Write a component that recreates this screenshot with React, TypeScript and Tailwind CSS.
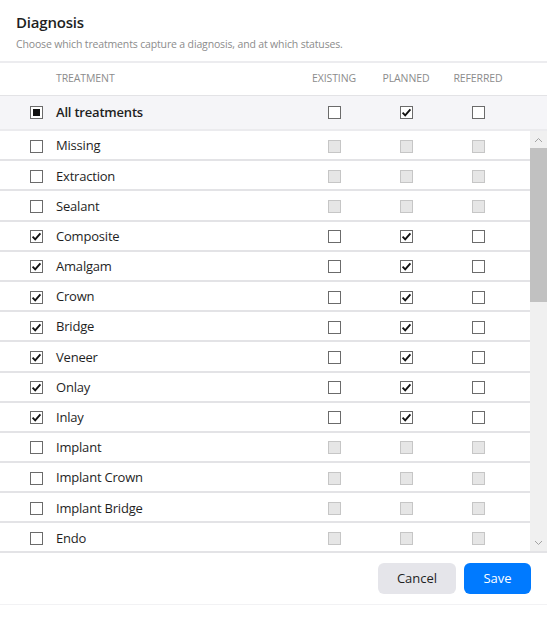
import type { ReactNode } from 'react'

type Status = 'existing' | 'planned' | 'referred'

type Treatment = {
  name: string
  enabled: boolean
  statuses: Status[]
}

const STATUSES: { id: Status; label: string }[] = [
  { id: 'existing', label: 'Existing' },
  { id: 'planned', label: 'Planned' },
  { id: 'referred', label: 'Referred' },
]

const TREATMENTS: Treatment[] = [
  { name: 'Missing', enabled: false, statuses: [] },
  { name: 'Extraction', enabled: false, statuses: [] },
  { name: 'Sealant', enabled: false, statuses: [] },
  { name: 'Composite', enabled: true, statuses: ['planned'] },
  { name: 'Amalgam', enabled: true, statuses: ['planned'] },
  { name: 'Crown', enabled: true, statuses: ['planned'] },
  { name: 'Bridge', enabled: true, statuses: ['planned'] },
  { name: 'Veneer', enabled: true, statuses: ['planned'] },
  { name: 'Onlay', enabled: true, statuses: ['planned'] },
  { name: 'Inlay', enabled: true, statuses: ['planned'] },
  { name: 'Implant', enabled: false, statuses: [] },
  { name: 'Implant Crown', enabled: false, statuses: [] },
  { name: 'Implant Bridge', enabled: false, statuses: [] },
  { name: 'Endo', enabled: false, statuses: [] },
  { name: 'Post & Core', enabled: false, statuses: [] },
]

function Checkbox({
  checked = false,
  mixed = false,
  disabled = false,
}: {
  checked?: boolean
  mixed?: boolean
  disabled?: boolean
}) {
  return (
    <span
      className={
        disabled
          ? 'flex h-[13px] w-[13px] items-center justify-center border border-[#c6c6c6] bg-[#e6e6e6]'
          : 'flex h-[13px] w-[13px] items-center justify-center border border-[#6b6b6b] bg-white'
      }
    >
      {mixed && <span className="h-[7px] w-[7px] bg-[#111]" />}
      {checked && !mixed && (
        <svg width="11" height="11" viewBox="0 0 11 11" fill="none">
          <path d="M1.6 5.6 4.2 8.3 9.4 2.4" stroke="#111" strokeWidth="1.9" />
        </svg>
      )}
    </span>
  )
}

function Row({ children, className }: { children: ReactNode; className: string }) {
  return <div className={`flex items-center ${className}`}>{children}</div>
}

function StatusCells({ t }: { t: Treatment }) {
  return (
    <>
      {STATUSES.map((s) => (
        <div key={s.id} className="flex w-[72px] justify-center">
          <Checkbox disabled={!t.enabled} checked={t.statuses.includes(s.id)} />
        </div>
      ))}
    </>
  )
}

export default function App() {
  return (
    <div
      className="h-[640px] w-[560px] bg-white text-[#1f1f1f]"
      style={{ fontFamily: '"Open Sans", "Noto Sans", sans-serif' }}
    >
      <div className="w-[547px] border-b border-[#f2f2f4]">
        {/* Heading */}
        <div className="px-4 pt-[11px] pb-[10px]">
          <h2 className="text-[15px] leading-[22px] font-semibold tracking-[-0.2px]">Diagnosis</h2>
          <p className="mt-[4px] text-[10.5px] leading-[14px] tracking-[-0.15px] text-[#8c8c8c]">
            Choose which treatments capture a diagnosis, and at which statuses.
          </p>
        </div>

        {/* Column headers */}
        <Row className="h-[35px] border-t-2 border-b border-t-[#ececef] border-b-[#e3e3e6] pr-[33px] text-[10.5px] tracking-[-0.1px] text-[#8c8c8c] uppercase">
          <div className="flex-1 pl-[56px]">Treatment</div>
          {STATUSES.map((s) => (
            <div key={s.id} className="w-[72px] text-center">
              {s.label}
            </div>
          ))}
        </Row>

        {/* Select-all row */}
        <Row className="h-[35px] border-b-2 border-[#ebebee] bg-[#f5f5f8] pr-[33px]">
          <div className="w-[56px] pl-[30px]">
            <Checkbox mixed />
          </div>
          <div className="flex-1 text-[13px] font-semibold tracking-[-0.2px]">All treatments</div>
          <div className="flex w-[72px] justify-center">
            <Checkbox />
          </div>
          <div className="flex w-[72px] justify-center">
            <Checkbox checked />
          </div>
          <div className="flex w-[72px] justify-center">
            <Checkbox />
          </div>
        </Row>

        {/* Treatment list with scrollbar */}
        <div className="flex h-[422px] border-b-2 border-[#e3e3e6]">
          <div className="flex-1 overflow-hidden">
            {TREATMENTS.map((t) => (
              <Row key={t.name} className="h-[30.2px] border-b-2 border-[#e3e3e6] pr-4 pt-[2px]">
                <div className="w-[56px] pl-[30px]">
                  <Checkbox checked={t.enabled} />
                </div>
                <div className="flex-1 text-[13px] tracking-[-0.2px]">{t.name}</div>
                <StatusCells t={t} />
              </Row>
            ))}
          </div>
          <div className="flex w-[17px] flex-col bg-[#f0f0f0]">
            <div className="flex h-[17px] items-center justify-center">
              <svg width="9" height="6" viewBox="0 0 9 6" fill="none">
                <path d="M1 5 4.5 1.5 8 5" stroke="#a3a3a3" strokeWidth="1" />
              </svg>
            </div>
            <div className="h-[154px] bg-[#c1c1c1]" />
            <div className="flex-1" />
            <div className="flex h-[17px] items-center justify-center">
              <svg width="9" height="6" viewBox="0 0 9 6" fill="none">
                <path d="M1 1 4.5 4.5 8 1" stroke="#a3a3a3" strokeWidth="1" />
              </svg>
            </div>
          </div>
        </div>

        {/* Footer actions */}
        <div className="flex justify-end gap-2 pt-[10px] pb-[10px] pr-4">
          <button className="h-[31px] w-[78px] rounded-md bg-[#e5e5ea] text-[13px] text-[#1f1f1f]">
            Cancel
          </button>
          <button className="h-[31px] w-[67px] rounded-md bg-[#007aff] text-[13px] text-white">
            Save
          </button>
        </div>
      </div>
    </div>
  )
}
